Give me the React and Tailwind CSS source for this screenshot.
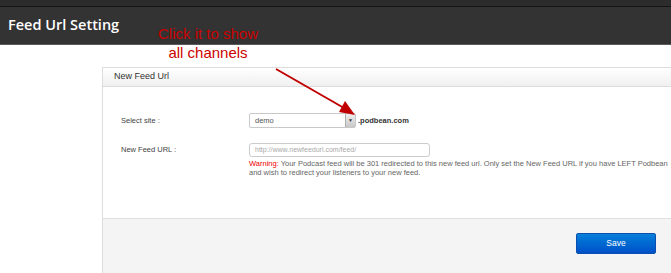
export default function App() {
  return (
    <div className="relative flex h-[273px] w-[671px] flex-col overflow-hidden bg-white" style={{ fontFamily: "Arial, 'Liberation Sans', sans-serif" }}>
      {/* top bar */}
      <div className="flex h-[45px] flex-col">
        <div className="h-[6px] bg-[#2c2c2c]" />
        <div className="h-[1px] bg-[#151515]" />
        <div className="flex flex-1 items-center bg-[#333333] pl-[8px]">
          <span className="text-[14.5px] font-semibold leading-none text-white" style={{ fontFamily: "'Open Sans', sans-serif" }}>
            Feed Url Setting
          </span>
        </div>
        <div className="h-[1px] bg-[#5a5a5a]" />
      </div>

      {/* panel */}
      <div className="ml-[102px] mt-[22px] flex flex-1 flex-col border-l border-t border-[#dddddd]">
        <div className="flex h-[19px] items-center border-b border-[#dddddd] bg-gradient-to-b from-[#ffffff] to-[#f0f0f0] pl-[11px]">
          <span className="text-[9px] text-[#333333]">New Feed Url</span>
        </div>
        <div className="flex h-[131px] flex-col pt-[26px]">
          <div className="flex h-[15px] items-center">
            <div className="ml-[18px] w-[128px] shrink-0 text-[7.5px] text-[#444444]">Select site :</div>
            <div className="flex h-[15px] w-[107px] shrink-0 items-stretch rounded-[2px] border border-[#c8c8c8] bg-white">
              <div className="flex flex-1 items-center pl-[5px] text-[7.5px] text-[#555555]">demo</div>
              <div className="flex w-[10px] items-center justify-center border-l border-[#b0b0b0] bg-gradient-to-b from-[#f0f0f0] to-[#c8c8c8] text-[5px] text-[#333333]">▼</div>
            </div>
            <span className="ml-[2px] text-[7.5px] font-bold text-[#333333]">.podbean.com</span>
          </div>
          <div className="mt-[15px] flex">
            <div className="ml-[18px] flex h-[14px] w-[128px] shrink-0 items-center text-[7.5px] text-[#444444]">New Feed URL :</div>
            <div className="flex min-w-0 flex-col">
              <div className="flex h-[14px] w-[181px] items-center rounded-[3px] border border-[#cccccc] pl-[5px] text-[7px] text-[#aaaaaa]">
                http://www.newfeedurl.com/feed/
              </div>
              <div className="mt-[2px] whitespace-nowrap text-[7.5px] leading-[9px] text-[#666666]">
                <span className="text-[#ee0000]">Warning:</span> Your Podcast feed will be 301 redirected to this new feed url. Only set the New Feed URL if you have LEFT Podbean
                <br />
                and wish to redirect your listeners to your new feed.
              </div>
            </div>
          </div>
        </div>
        <div className="flex flex-1 items-start justify-end border-t border-[#e0e0e0] bg-[#f4f4f4] pr-[15px] pt-[14px]">
          <button className="flex h-[21px] w-[80px] items-center justify-center rounded-[2px] border border-[#0a4fb0] bg-gradient-to-b from-[#0b7fd9] to-[#0050c8] text-[8.5px] text-white">
            Save
          </button>
        </div>
      </div>

      {/* annotation */}
      <div className="absolute left-[140px] top-[24px] w-[136px] text-center text-[15px] leading-[19px] text-[#cc0000]">
        Click it to show
        <br />
        all channels
      </div>
      <svg className="pointer-events-none absolute left-0 top-0" width="671" height="273">
        <line x1="276" y1="69" x2="344" y2="108" stroke="#c00000" strokeWidth="2" />
        <polygon points="355,115 339,112 345,101" fill="#c00000" />
      </svg>
    </div>
  );
}
